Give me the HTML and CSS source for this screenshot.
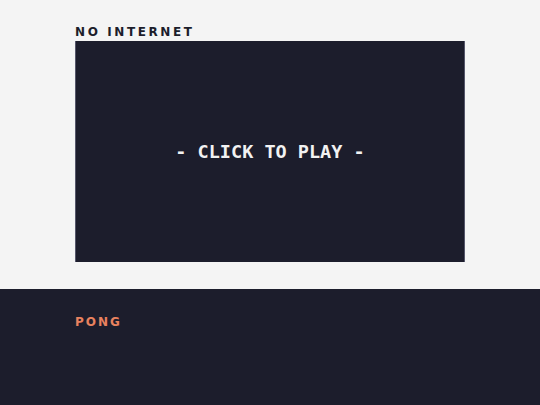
FILE: index.html
```html
<!DOCTYPE html>
<html>
<head>
<meta charset="utf-8">
<link rel="stylesheet" href="styles.css">
</head>
<body>
<section class="stage">
  <h2 class="label">NO INTERNET</h2>
  <div class="screen">
    <span class="prompt">- CLICK TO PLAY -</span>
  </div>
</section>
<section class="footer">
  <h3 class="game">PONG</h3>
</section>
</body>
</html>
```

FILE: styles.css
```css
html, body {
  margin: 0;
  padding: 0;
}

body {
  background: #f4f4f4;
  font-family: "DejaVu Sans Mono", monospace;
}

.stage {
  height: 289px;
  padding: 26px 0 0 75px;
  box-sizing: border-box;
}

.label {
  margin: 0 0 3px;
  font-family: "DejaVu Sans", sans-serif;
  font-size: 12px;
  line-height: 12px;
  font-weight: bold;
  letter-spacing: 2.6px;
  color: #1c1d2b;
}

.screen {
  width: 390px;
  height: 221px;
  box-sizing: border-box;
  background: #1c1d2c;
  border-left: 1px solid #55566a;
  border-right: 1px solid #55566a;
  display: flex;
  align-items: center;
  justify-content: center;
}

.prompt {
  color: #f2f2f2;
  font-size: 18.5px;
  font-weight: bold;
}

.footer {
  background: #1c1d2c;
  height: 116px;
  padding: 27px 0 0 75px;
  box-sizing: border-box;
}

.game {
  margin: 0;
  font-family: "DejaVu Sans", sans-serif;
  font-size: 12px;
  line-height: 12px;
  font-weight: bold;
  letter-spacing: 2px;
  color: #e8825f;
}
```
